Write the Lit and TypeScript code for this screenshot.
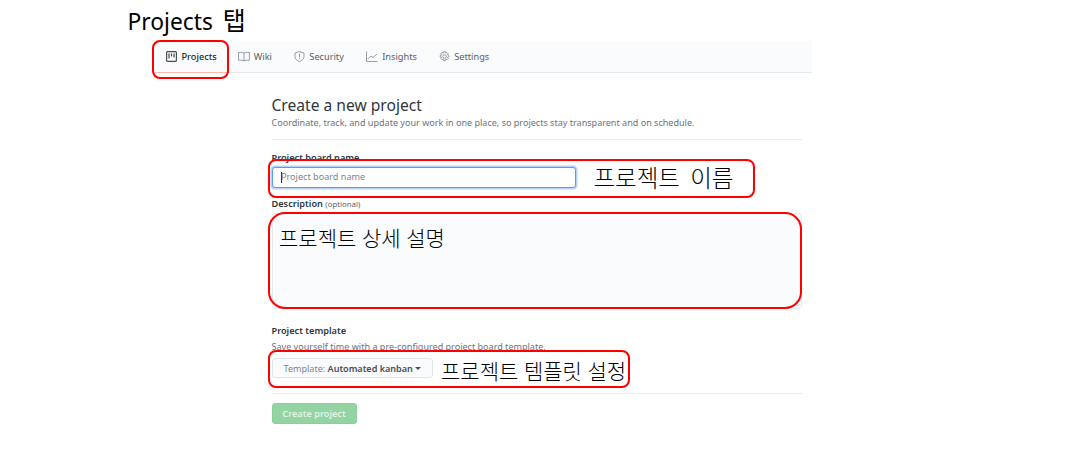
import { LitElement, html, css, svg } from "lit";
import { customElement } from "lit/decorators.js";

const icon = (w: number, body: unknown) => html`<svg class="ic" width=${w} height="11" viewBox="0 0 ${w} 11" fill="none" stroke="currentColor">${body}</svg>`;

const icons = {
  projects: icon(11, svg`<rect x=".6" y=".6" width="9.8" height="9.8" rx="1" stroke-width="1.2"/><path d="M3 2.5v5M5.5 2.5v3M8 2.5v4" stroke-width="1.2"/>`),
  wiki: icon(12, svg`<path d="M6 2.2C5 1.4 3 1.3.6 1.5v7.8c2.4-.2 4.4-.1 5.4.7 1-.8 3-.9 5.4-.7V1.5C9 1.3 7 1.4 6 2.2zM6 2.2V10" stroke-width=".9"/>`),
  security: icon(11, svg`<path d="M5.5.6 1 2v3.5c0 2.5 2 4.2 4.5 5 2.5-.8 4.5-2.5 4.5-5V2z" stroke-width=".9"/><path d="M5.5 2.8v3.4M5.5 7.2v1" stroke-width="1"/>`),
  insights: icon(12, svg`<path d="M.5.5v10h11" stroke-width=".9"/><path d="M2 8l3-3 2 1.5L11 3" stroke-width=".9"/>`),
  settings: icon(11, svg`<circle cx="5.5" cy="5.5" r="1.8" stroke-width=".9"/><path d="M4.6.7h1.8l.3 1.4 1.2-.7 1.3 1.3-.8 1.2 1.4.4v1.6l-1.4.4.8 1.2-1.3 1.3-1.2-.7-.3 1.4H4.6l-.3-1.4-1.2.7-1.3-1.3.8-1.2L1.2 6V4.4l1.4-.4-.8-1.2 1.3-1.3 1.2.7z" stroke-width=".9"/>`),
};

@customElement("app-root")
export class AppRoot extends LitElement {
  static styles = css`
    :host {
      display: block;
      position: relative;
      width: 1079px;
      height: 465px;
      overflow: hidden;
      background: #fff;
      font-family: "Noto Sans", "Open Sans", sans-serif;
      color: #24292e;
    }
    .page-title {
      height: 41px;
      padding: 3px 0 0 127.5px;
      box-sizing: border-box;
      font: 22.8px/34px "Noto Sans", "Noto Sans CJK KR", sans-serif;
      color: #000;
      white-space: nowrap;
    }
    .page-title span { font-size: 25px; margin-left: 4px; }
    .tabs {
      display: flex;
      margin-left: 152px;
      width: 660px;
      height: 32px;
      box-sizing: border-box;
      padding-left: 14px;
      align-items: center;
      gap: 22.4px;
      background: #fafbfc;
      border-bottom: 1px solid #e6e9ec;
      font-size: 9.2px;
      color: #586069;
    }
    .tab { display: flex; align-items: center; gap: 4px; }
    .tab.on {
      gap: 4.5px;
      align-self: stretch;
      margin: 0 -12.3px -1px -11px;
      padding: 0 11px;
      border-bottom: 1px solid #fbb8a8;
      color: #24292e;
      font-weight: 500;
    }
    .ic { flex: none; color: #8b949c; }
    .tab.on .ic { color: #444d56; }
    .form {
      margin-left: 271.5px;
      width: 530px;
      display: flex;
      flex-direction: column;
    }
    h1 {
      margin: 21px 0 0;
      font-size: 15.6px;
      line-height: 22px;
      font-weight: 400;
      color: #2f363d;
    }
    .sub { margin-top: 0; font-size: 9.05px; line-height: 13px; color: #6a737d; }
    hr { width: 100%; margin: 0; border: 0; border-top: 1px solid #e9ebed; }
    .sep1 { margin-top: 10px; }
    .label { font-size: 9.2px; line-height: 12px; font-weight: 600; color: #2f363d; }
    .label small { font-size: 7.8px; font-weight: 400; color: #586069; }
    .l1 { margin-top: 11.5px; }
    .input {
      margin-top: 3px;
      margin-left: .5px;
      width: 304px;
      height: 21px;
      box-sizing: border-box;
      border: 1px solid #5a9bea;
      border-radius: 3px;
      box-shadow: 0 0 0 1.5px #b6d4f7;
      padding: 0 8px 2px;
      display: flex;
      align-items: center;
      font-size: 9.1px;
      color: #7d858c;
      background: #fff;
    }
    .caret { width: 1px; height: 11px; background: #24292e; margin: 2px -1px 0 0; }
    .l2 { margin-top: 10.5px; }
    .area {
      position: relative;
      margin-top: 3px;
      height: 96px;
      background: #fafbfc;
      border: 1px solid #e6e9ec;
      border-radius: 3px;
      box-sizing: border-box;
    }
    .grip { position: absolute; right: 1px; bottom: 1px; }
    .l3 { margin-top: 16px; }
    .sub2 { margin-top: 4px; line-height: 11px; }
    .select {
      margin-top: 6px;
      width: 161px;
      height: 20px;
      box-sizing: border-box;
      border: 1px solid #e1e4e8;
      border-radius: 3px;
      background: #fafbfc;
      display: flex;
      align-items: center;
      padding-left: 11px;
      font-size: 9.05px;
      color: #7d858c;
      white-space: pre;
    }
    .select b { font-weight: 600; color: #444d56; }
    .tri { margin-left: 2px; border: 3px solid transparent; border-top-color: #444d56; border-bottom: 0; }
    .sep2 { margin-top: 15px; }
    .create {
      margin-top: 9px;
      width: 85px;
      height: 21px;
      border-radius: 3px;
      background: #94d3a2;
      border: 1px solid #8bcf9b;
      box-sizing: border-box;
      display: flex;
      align-items: center;
      justify-content: center;
      font-size: 9.2px;
      font-weight: 600;
      color: #dff3e4;
    }
    .box {
      position: absolute;
      box-sizing: border-box;
      border: 2px solid #f00;
      border-radius: 8px;
    }
    .b1 { left: 152px; top: 40px; width: 77px; height: 39px; }
    .b2 { left: 268px; top: 159px; width: 487px; height: 39px; }
    .b3 { left: 268px; top: 212px; width: 534px; height: 97px; border-radius: 17px; }
    .b4 { left: 268px; top: 350px; width: 362px; height: 38px; }
    .note {
      position: absolute;
      font: 21px/28px "Noto Sans CJK KR", sans-serif;
      font-weight: 300;
      color: #000;
      white-space: nowrap;
      word-spacing: 1px;
    }
    .n1 { left: 593.5px; top: 163px; font-size: 23.5px; word-spacing: 5px; }
    .n2 { left: 279px; top: 223px; }
    .n3 { left: 441px; top: 356px; }
  `;

  render() {
    return html`
      <div class="page-title">Projects <span>탭</span></div>
      <nav class="tabs">
        <div class="tab on">${icons.projects}<span>Projects</span></div>
        <div class="tab">${icons.wiki}<span>Wiki</span></div>
        <div class="tab">${icons.security}<span>Security</span></div>
        <div class="tab">${icons.insights}<span>Insights</span></div>
        <div class="tab">${icons.settings}<span>Settings</span></div>
      </nav>
      <main class="form">
        <h1>Create a new project</h1>
        <div class="sub">Coordinate, track, and update your work in one place, so projects stay transparent and on schedule.</div>
        <hr class="sep1" />
        <div class="label l1">Project board name</div>
        <div class="input"><span class="caret"></span><span>Project board name</span></div>
        <div class="label l2">Description <small>(optional)</small></div>
        <div class="area">
          <svg class="grip" width="7" height="7" viewBox="0 0 7 7" fill="none" stroke="#b5b9bd" stroke-width=".8"><path d="M1 6.5 6.5 1M4 6.5 6.5 4"/></svg>
        </div>
        <div class="label l3">Project template</div>
        <div class="sub sub2">Save yourself time with a pre-configured project board template.</div>
        <div class="select">Template: <b>Automated kanban</b><span class="tri"></span></div>
        <hr class="sep2" />
        <div class="create">Create project</div>
      </main>
      <div class="box b1"></div>
      <div class="box b2"></div>
      <div class="box b3"></div>
      <div class="box b4"></div>
      <div class="note n1">프로젝트 이름</div>
      <div class="note n2">프로젝트 상세 설명</div>
      <div class="note n3">프로젝트 템플릿 설정</div>
    `;
  }
}
